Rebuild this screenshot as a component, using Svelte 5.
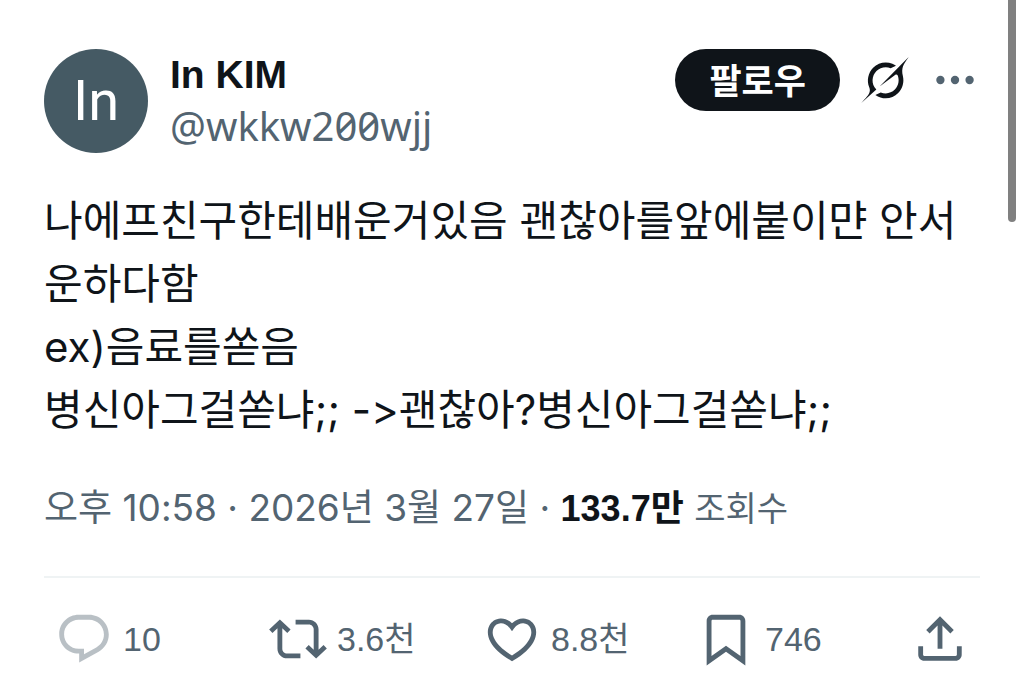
<script>
  const post = {
    initials: "In",
    name: "In KIM",
    handle: "@wkkw200wjj",
    lines: [
      "나에프친구한테배운거있음 괜찮아를앞에붙이먄 안서운하다함",
      "ex)음료를쏟음",
      "병신아그걸쏟냐;; ->괜찮아?병신아그걸쏟냐;;",
    ],
    date: "오후 10:58 · 2026년 3월 27일",
    views: "133.7만",
  };

  const actions = [
    {
      id: "reply",
      label: "답글",
      count: "10",
      path: "M1.751 10c0-4.42 3.584-8 8.005-8h4.366c4.49 0 8.129 3.64 8.129 8.13 0 2.96-1.607 5.68-4.196 7.11l-8.054 4.46v-3.69h-.067c-4.49.1-8.183-3.51-8.183-8.01zm8.005-6c-3.317 0-6.005 2.69-6.005 6 0 3.37 2.77 6.08 6.138 6.01l.351-.01h1.761v2.3l5.087-2.81c1.951-1.08 3.163-3.13 3.163-5.36 0-3.39-2.744-6.13-6.129-6.13H9.756z",
    },
    {
      id: "repost",
      label: "재게시",
      count: "3.6천",
      path: "M4.5 3.88l4.432 4.14-1.364 1.46L5.5 7.55V16c0 1.1.896 2 2 2H13v2H7.5c-2.209 0-4-1.79-4-4V7.55L1.432 9.48.068 8.02 4.5 3.88zM16.5 6H11V4h5.5c2.209 0 4 1.79 4 4v8.45l2.068-1.93 1.364 1.46-4.432 4.14-4.432-4.14 1.364-1.46 2.068 1.93V8c0-1.1-.896-2-2-2z",
    },
    {
      id: "like",
      label: "마음에 들어요",
      count: "8.8천",
      path: "M16.697 5.5c-1.222-.06-2.679.51-3.89 2.16l-.805 1.09-.806-1.09C9.984 6.01 8.526 5.44 7.304 5.5c-1.243.07-2.349.78-2.91 1.91-.552 1.12-.633 2.78.479 4.82 1.074 1.97 3.257 4.27 7.129 6.61 3.87-2.34 6.052-4.64 7.126-6.61 1.111-2.04 1.03-3.7.477-4.82-.561-1.13-1.666-1.84-2.908-1.91zm4.187 7.69c-1.351 2.48-4.001 5.12-8.379 7.67l-.503.3-.504-.3c-4.379-2.55-7.029-5.19-8.382-7.67-1.36-2.5-1.41-4.86-.514-6.67.887-1.79 2.647-2.91 4.601-3.01 1.651-.09 3.368.56 4.798 2.01 1.429-1.45 3.146-2.1 4.796-2.01 1.954.1 3.714 1.22 4.601 3.01.896 1.81.846 4.17-.514 6.67z",
    },
    {
      id: "bookmark",
      label: "북마크",
      count: "746",
      path: "M4 4.5C4 3.12 5.119 2 6.5 2h11C18.881 2 20 3.12 20 4.5v18.44l-8-5.71-8 5.71V4.5zM6.5 4c-.276 0-.5.22-.5.5v14.56l6-4.29 6 4.29V4.5c0-.28-.224-.5-.5-.5h-11z",
    },
    {
      id: "share",
      label: "공유하기",
      count: "",
      path: "M12 2.59l5.7 5.7-1.41 1.42L13 6.41V16h-2V6.41l-3.3 3.3-1.41-1.42L12 2.59zM21 15l-.02 3.51c0 1.38-1.12 2.49-2.5 2.49H5.5C4.11 21 3 19.88 3 18.5V15h2v3.5c0 .28.22.5.5.5h12.98c.28 0 .5-.22.5-.5L19 15h2z",
    },
  ];
</script>

<article class="post">
  <header>
    <div class="avatar">{post.initials}</div>
    <div class="author">
      <a class="name" href="#profile">{post.name}</a>
      <a class="handle" href="#profile">{post.handle}</a>
    </div>
    <div class="tools">
      <button class="follow">팔로우</button>
      <button class="icon" aria-label="Grok">
        <svg class="grok" viewBox="0 0 33 32">
          <path
            d="M12.745 20.54l10.97-8.19c.539-.4 1.307-.244 1.564.38 1.349 3.288.746 7.241-1.938 9.955-2.683 2.714-6.417 3.31-9.83 1.954l-3.728 1.745c5.347 3.697 11.84 2.782 15.898-1.324 3.219-3.255 4.216-7.692 3.284-11.693l.008.009c-1.351-5.878.332-8.227 3.782-13.031L33 0l-4.54 4.59v-.014L12.743 20.544m-2.263 1.987c-3.837-3.707-3.175-9.446.1-12.755 2.42-2.449 6.388-3.448 9.852-1.979l3.72-1.737c-.67-.49-1.53-1.017-2.515-1.387-4.455-1.854-9.789-.931-13.41 2.728-3.483 3.523-4.579 8.94-2.697 13.561 1.405 3.454-.899 5.898-3.22 8.364C1.49 30.2.666 31.074 0 32l10.478-9.466"
          />
        </svg>
      </button>
      <button class="icon" aria-label="더 보기">
        <svg class="more" viewBox="0 0 24 24">
          <circle cx="5" cy="12" r="2" />
          <circle cx="12" cy="12" r="2" />
          <circle cx="19" cy="12" r="2" />
        </svg>
      </button>
    </div>
  </header>

  <div class="text">
    {#each post.lines as line}
      <p>{line}</p>
    {/each}
  </div>

  <div class="meta">
    {post.date} · <strong>{post.views}</strong> <span class="views">조회수</span>
  </div>

  <div class="actions">
    {#each actions as action}
      <button class="action {action.id}" aria-label={action.label}>
        <svg viewBox="0 0 24 24"><path d={action.path} /></svg>
        {#if action.count}
          <span>{action.count}</span>
        {/if}
      </button>
    {/each}
  </div>
</article>
<div class="scroll-thumb"></div>

<style>
  :global(body) {
    background: #fff;
  }

  .post {
    padding: 49px 44px 20px;
    color: #0f1419;
    font-family: "Noto Sans CJK KR", sans-serif;
  }

  button {
    margin: 0;
    padding: 0;
    border: 0;
    background: none;
    color: inherit;
    font: inherit;
    cursor: pointer;
  }

  a {
    text-decoration: none;
  }

  svg {
    display: block;
    flex: none;
    fill: currentColor;
  }

  header {
    display: flex;
    align-items: flex-start;
    gap: 22px;
  }

  .avatar {
    display: flex;
    flex: none;
    align-items: center;
    justify-content: center;
    width: 104px;
    height: 104px;
    border-radius: 50%;
    background: #455a64;
    color: #fff;
    font-family: Roboto, sans-serif;
    font-size: 56px;
  }

  .author {
    display: flex;
    flex: 1;
    flex-direction: column;
    line-height: 51px;
  }

  .name {
    color: #0f1419;
    font-family: "Liberation Sans", sans-serif;
    font-size: 39px;
    font-weight: 700;
  }

  .handle {
    color: #536471;
    font-family: "Noto Sans", sans-serif;
    font-size: 40px;
    font-feature-settings: "zero";
  }

  .tools {
    display: flex;
    align-items: center;
    gap: 21px;
  }

  .follow {
    padding: 0 34px 2px;
    border-radius: 31px;
    background: #0f1419;
    color: #fff;
    font-size: 35px;
    font-weight: 700;
    line-height: 60px;
  }

  .grok {
    width: 48px;
    height: 46px;
  }

  .more {
    width: 50px;
    height: 50px;
    color: #536471;
  }

  .text {
    margin-top: 36px;
    font-family: Inter, "Noto Sans CJK KR", sans-serif;
    font-size: 42px;
    font-variant-ligatures: no-contextual;
    line-height: 63px;
  }

  p {
    margin: 0;
  }

  .meta {
    margin-top: 43px;
    padding-bottom: 43px;
    border-bottom: 2px solid #eff3f4;
    color: #536471;
    font-family: Inter, "Noto Sans CJK KR", sans-serif;
    font-size: 37px;
    line-height: 48px;
  }

  .meta strong {
    color: #0f1419;
    font-family: "Liberation Sans", "Noto Sans CJK KR", sans-serif;
    font-size: 36px;
    font-weight: 700;
  }

  .views {
    font-size: 34px;
  }

  .actions {
    display: flex;
    margin: 32px 11px 0;
    color: #536471;
    font-family: "Liberation Sans", "Noto Sans CJK KR", sans-serif;
    font-size: 34px;
    line-height: 58px;
  }

  .action {
    display: flex;
    flex: 1;
    align-items: center;
    gap: 10px;
  }

  .action svg {
    width: 58px;
    height: 58px;
  }

  .reply svg {
    opacity: 0.4;
  }

  .share {
    flex: none;
  }

  .scroll-thumb {
    position: absolute;
    top: 0;
    right: 8px;
    width: 8px;
    height: 222px;
    border-radius: 0 0 4px 4px;
    background: #808080;
  }
</style>
